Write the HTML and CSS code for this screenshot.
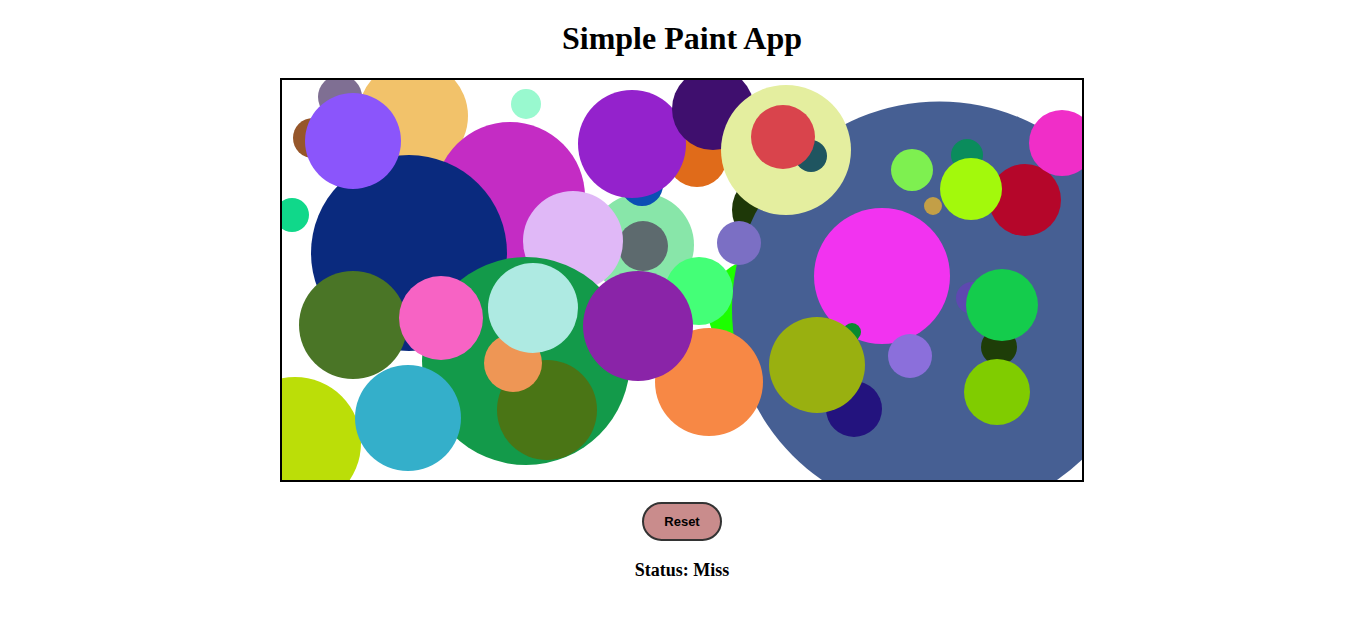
FILE: index.html
```html
<!DOCTYPE html>
<html lang="en">
<head>
<meta charset="utf-8">
<title>Simple Paint App</title>
<link rel="stylesheet" href="styles.css">
</head>
<body>
<main class="app">
  <h1 class="title">Simple Paint App</h1>
  <svg class="board" width="800" height="400" viewBox="0 0 800 400">
    <circle cx="478" cy="230" r="52" fill="#1cff00"/>
    <circle cx="488" cy="130" r="38" fill="#1e3808"/>
    <circle cx="657.5" cy="229" r="207.5" fill="#465f93"/>
    <circle cx="58" cy="17" r="22" fill="#7f6f93"/>
    <circle cx="131" cy="36" r="55" fill="#f2c26a"/>
    <circle cx="228" cy="117" r="75" fill="#c42cc4"/>
    <circle cx="31" cy="58" r="20" fill="#96562a"/>
    <circle cx="127" cy="173" r="98" fill="#0a2a7e"/>
    <circle cx="71" cy="61" r="48" fill="#8b55fb"/>
    <circle cx="244" cy="24" r="15" fill="#99f9cf"/>
    <circle cx="10" cy="135" r="17" fill="#10d88a"/>
    <circle cx="360" cy="165" r="52" fill="#88e6a9"/>
    <circle cx="360" cy="105" r="21" fill="#0b4fb4"/>
    <circle cx="415" cy="77" r="30" fill="#e06b1a"/>
    <circle cx="350" cy="64" r="54" fill="#9422cc"/>
    <circle cx="431" cy="29" r="41" fill="#3f0f6e"/>
    <circle cx="504" cy="70" r="65" fill="#e4ee9f"/>
    <circle cx="529" cy="76" r="16" fill="#1f5560"/>
    <circle cx="501" cy="57" r="32" fill="#d9444c"/>
    <circle cx="361" cy="166" r="25" fill="#5d6a6e"/>
    <circle cx="291" cy="161" r="50" fill="#e0b8f7"/>
    <circle cx="457" cy="163" r="22" fill="#7b6fc4"/>
    <circle cx="244" cy="281" r="104" fill="#139a4a"/>
    <circle cx="71" cy="245" r="54" fill="#4a7526"/>
    <circle cx="13" cy="363" r="66" fill="#bbde08"/>
    <circle cx="126" cy="338" r="53" fill="#34afca"/>
    <circle cx="159" cy="238" r="42" fill="#f763c4"/>
    <circle cx="265" cy="330" r="50" fill="#4a7515"/>
    <circle cx="231" cy="283" r="29" fill="#ee9655"/>
    <circle cx="251" cy="228" r="45" fill="#aeeae2"/>
    <circle cx="417" cy="211" r="34" fill="#44ff77"/>
    <circle cx="427" cy="302" r="54" fill="#f78845"/>
    <circle cx="356" cy="246" r="55" fill="#8a24a8"/>
    <circle cx="630" cy="90" r="21" fill="#7ef050"/>
    <circle cx="685" cy="75" r="16" fill="#0a8c5c"/>
    <circle cx="651" cy="126" r="9" fill="#c39f47"/>
    <circle cx="743" cy="120" r="36" fill="#b5062a"/>
    <circle cx="780" cy="63" r="33" fill="#f02ec8"/>
    <circle cx="689" cy="109" r="31" fill="#a3f90c"/>
    <circle cx="600" cy="196" r="68" fill="#f233f0"/>
    <circle cx="570" cy="252" r="9" fill="#0a8a30"/>
    <circle cx="572" cy="329" r="28" fill="#23137e"/>
    <circle cx="628" cy="276" r="22" fill="#8b6fdb"/>
    <circle cx="535" cy="285" r="48" fill="#99b010"/>
    <circle cx="690" cy="218" r="16" fill="#5e48b0"/>
    <circle cx="717" cy="267" r="18" fill="#1e3d08"/>
    <circle cx="720" cy="225" r="36" fill="#14cc4c"/>
    <circle cx="715" cy="312" r="33" fill="#80cc00"/>
  </svg>
  <button class="reset" type="button">Reset</button>
  <p class="status">Status: Miss</p>
</main>
</body>
</html>
```
FILE: styles.css
```css
html, body {
  margin: 0;
  padding: 0;
  background: #ffffff;
}

.app {
  display: flex;
  flex-direction: column;
  align-items: center;
  padding: 20px 1px 0 0;
  font-family: "Liberation Serif", "Times New Roman", serif;
  color: #000;
}

.title {
  margin: 0 0 21px;
  font-size: 32px;
  line-height: 37px;
  font-weight: bold;
}

.board {
  display: block;
  border: 2px solid #000;
  background: #fff;
}

.reset {
  margin-top: 20px;
  width: 80px;
  height: 39px;
  border: 2px solid #333;
  border-radius: 20px;
  background: #c98c8c;
  font-family: "Liberation Sans", Arial, sans-serif;
  font-size: 13px;
  font-weight: bold;
  color: #000;
  padding: 0;
}

.status {
  margin: 19px 0 0;
  font-size: 18px;
  line-height: 21px;
  font-weight: bold;
}
```
